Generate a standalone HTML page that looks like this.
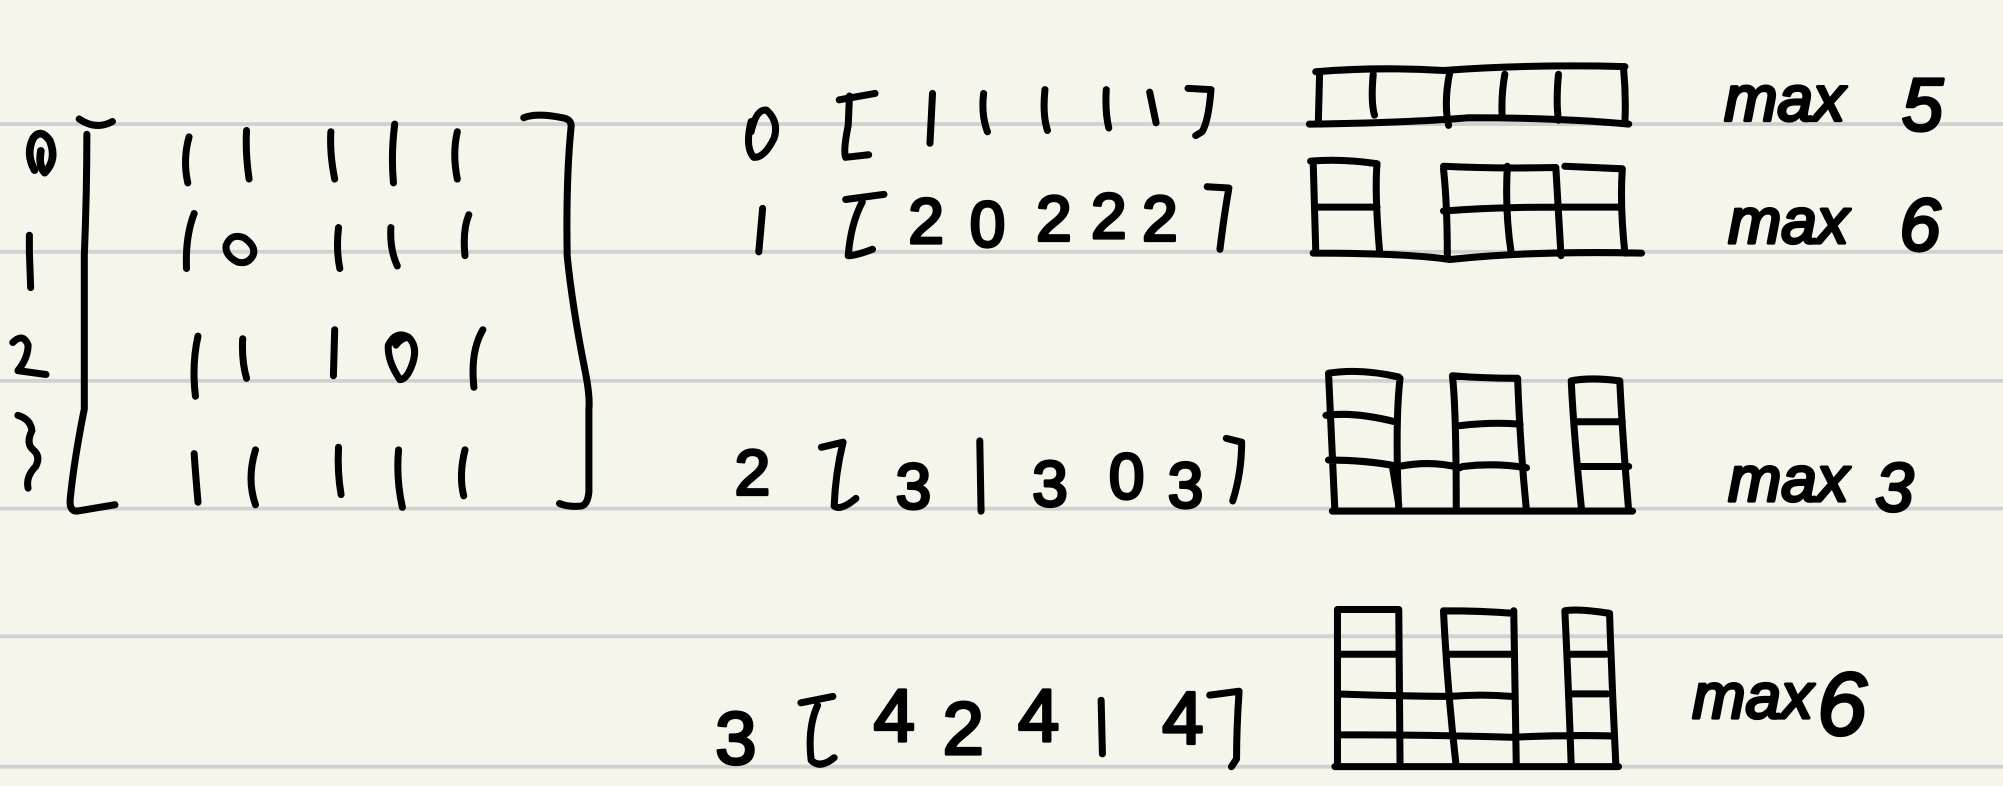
<!DOCTYPE html>
<html><head><meta charset="utf-8"><style>
html,body{margin:0;padding:0;background:#f6f5eb;}
svg{display:block}
text{font-family:"Liberation Sans",sans-serif;fill:#000;stroke:#000;stroke-width:2.5;stroke-linejoin:round;text-anchor:middle}
</style></head><body>
<svg width="2003" height="786" viewBox="0 0 1568 615" xmlns="http://www.w3.org/2000/svg">
<rect width="1568" height="615" fill="#f6f5eb"/>
<g stroke="#d2d1d2" stroke-width="3">
<line x1="0" y1="97" x2="1568" y2="97"/><line x1="0" y1="197" x2="1568" y2="197"/>
<line x1="0" y1="298" x2="1568" y2="298"/><line x1="0" y1="398" x2="1568" y2="398"/>
<line x1="0" y1="498" x2="1568" y2="498"/><line x1="0" y1="600" x2="1568" y2="600"/>
</g>
<g fill="none" stroke="#000" stroke-width="5.5" stroke-linecap="round" stroke-linejoin="round">
<path d="M62 93 Q75 102 88 95"/>
<path d="M68 105 Q68 150 66 200 L66 320 Q58 360 55 390 Q54 400 60 400 L90 395"/>
<path d="M410 92 Q420 88 440 92 Q448 93 447 100 Q443 140 444 200 Q448 240 458 290 Q462 310 461 320 L461 385 Q460 395 455 396 Q445 397 438 394"/>
<path d="M27 133 Q20 120 26 108 Q32 100 39 110 Q45 125 35 135 Q30 130 32 118" stroke-width="6"/>
<path d="M23 184 L23 197 L24 225"/>
<path d="M10 268 Q18 260 22 270 Q22 280 14 290 L36 293"/>
<path d="M14 325 Q24 328 25 337 Q20 347 26 352 Q32 357 28 365 Q20 373 22 382"/>
<path d="M147 143 Q143 125 148 107"/><path d="M193 102 Q192 120 195 140"/><path d="M262 140 Q258 120 259 103"/><path d="M308 143 Q306 120 309 97"/><path d="M358 140 Q354 120 358 103"/>
<path d="M146 210 Q145 185 152 167"/><path d="M266 210 Q263 195 265 178"/><path d="M311 208 Q305 195 306 178"/><path d="M364 200 Q362 180 367 168"/>
<path d="M153 310 Q150 285 155 263"/><path d="M193 296 Q189 282 190 265"/><path d="M261 294 L262 258"/><path d="M371 303 Q368 275 378 258"/>
<path d="M155 393 Q153 370 152 355"/><path d="M200 395 Q193 375 200 352"/><path d="M267 387 Q264 370 265 350"/><path d="M315 397 Q310 375 312 352"/><path d="M363 388 Q359 372 364 352"/>
<path d="M186 205 Q176 200 177 192 Q181 182 191 186 Q201 193 198 200 Q194 207 186 205"/>
<path d="M313 297 Q303 282 304 270 Q310 258 320 264 Q328 272 322 287 Q318 297 313 297 M310 270 Q314 264 320 264"/>
<path d="M665 75 L664 98 Q660 118 662 123 L680 121 M657 78 L685 73"/>
<path d="M930 69 L948 70 Q946 95 941 103 L936 106"/>
<path d="M675 158 Q666 175 664 200 Q670 200 683 195 M662 156 L692 152"/>
<path d="M945 146 L962 147 Q958 170 955 195"/>
<path d="M660 346 Q654 370 653 396 Q658 400 670 390 M643 350 L660 346"/>
<path d="M960 343 L972 346 Q972 370 965 392"/>
<path d="M627 550 L652 545 M640 552 Q632 570 635 595 Q642 602 653 593"/>
<path d="M947 544 L970 541 Q968 570 968 594 L964 600"/>
<path d="M588 95 Q583 115 590 123 Q598 124 606 108 Q610 95 600 86 Q592 85 588 103"/>
<path d="M597 163 L594 197"/>
<path d="M730 73 L728 112"/><path d="M770 73 Q768 90 773 103"/><path d="M818 70 Q816 90 820 102"/><path d="M866 70 Q865 88 868 100"/><path d="M900 72 L905 96"/>
<path d="M767 345 L768 400"/><path d="M862 548 L863 590"/>
<path d="M1030 56 Q1080 52 1130 55 Q1200 50 1272 52 M1025 97 Q1100 96 1150 92 Q1220 92 1275 97 M1033 58 L1032 96 M1075 58 Q1073 80 1076 90 M1135 56 Q1130 80 1134 98 M1178 58 Q1175 75 1176 92 M1220 58 Q1218 80 1220 94 M1271 54 Q1273 75 1272 96"/>
<path d="M1026 126 Q1050 124 1078 128 M1030 162 L1078 162 M1028 198 Q1100 198 1135 203 Q1200 196 1285 198 M1028 127 L1030 196 M1078 128 Q1076 150 1080 197 M1130 132 Q1133 160 1133 200 M1130 130 Q1170 132 1218 131 M1130 165 Q1170 162 1218 162 M1180 130 Q1178 165 1183 198 M1218 132 Q1220 165 1222 200 M1218 162 L1268 162 M1225 130 L1270 132 M1270 132 Q1268 160 1272 198"/>
<path d="M1043 400 L1278 400 M1040 292 Q1065 288 1095 295 M1038 325 Q1060 322 1092 330 M1040 360 Q1070 360 1095 365 Q1120 360 1143 366 M1040 292 Q1042 340 1045 400 M1096 296 Q1092 330 1095 400 M1090 365 L1095 395 M1137 294 Q1140 320 1140 400 M1137 294 Q1160 296 1188 296 M1143 333 Q1170 330 1190 332 M1145 365 Q1170 362 1195 366 M1188 296 Q1190 350 1195 400 M1230 298 Q1245 295 1268 298 M1232 330 L1270 330 M1235 365 L1275 365 M1230 298 Q1232 340 1238 398 M1268 298 Q1270 340 1275 400"/>
<path d="M1045 600 L1267 600 M1047 477 L1095 477 M1047 512 L1095 512 M1047 543 Q1100 545 1135 545 Q1160 543 1183 545 M1047 575 Q1120 575 1183 577 Q1230 575 1262 576 M1047 477 L1047 600 M1095 477 L1096 600 M1130 478 Q1133 540 1140 600 M1130 478 Q1160 478 1185 480 M1135 512 L1183 512 M1185 478 L1187 600 M1225 478 Q1235 476 1260 480 M1228 512 L1257 512 M1228 543 L1258 543 M1225 478 Q1228 540 1230 600 M1260 480 Q1262 540 1265 600"/>
</g>
<g font-size="50">
<text x="725" y="190">2</text><text x="773" y="193">0</text><text x="825" y="188">2</text><text x="868" y="186">2</text><text x="908" y="188">2</text>
<text x="589" y="387">2</text><text x="715" y="398">3</text><text x="822" y="396">3</text><text x="882" y="390">0</text><text x="928" y="397">3</text>
</g>
<g font-size="58">
<text x="576" y="598">3</text><text x="700" y="580">4</text><text x="754" y="590">2</text><text x="813" y="580">4</text><text x="926" y="582">4</text>
</g>
<g font-size="50" font-style="italic">
<text x="1397" y="94">max</text><text x="1505" y="102" font-size="58">5</text>
<text x="1400" y="190">max</text><text x="1503" y="196" font-size="58">6</text>
<text x="1400" y="392">max</text><text x="1483" y="400" font-size="54">3</text>
<text x="1372" y="562">max</text><text x="1442" y="575" font-size="70">6</text>
</g>
</svg>
</body></html>
